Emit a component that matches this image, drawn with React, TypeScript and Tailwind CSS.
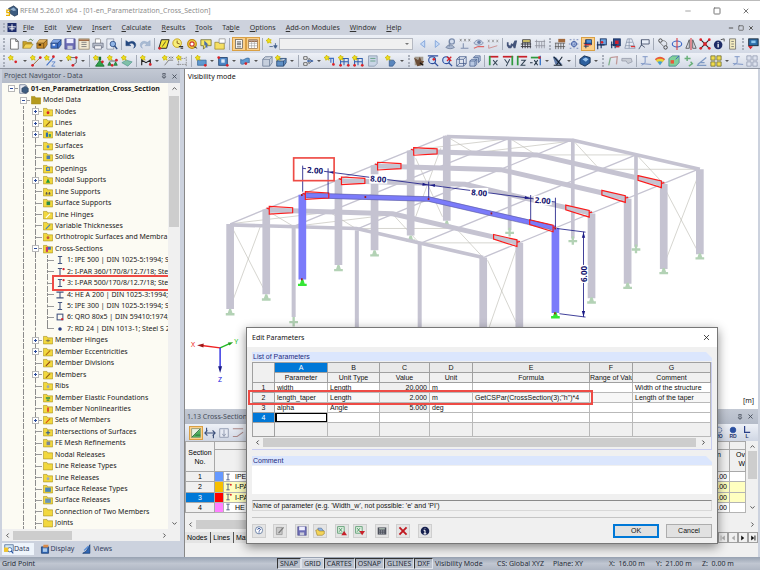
import type { ReactNode } from 'react';
import { X, Minus, Square, ChevronUp, ChevronDown, ChevronLeft, ChevronRight, Pin } from 'lucide-react';

/* ---------- icons, all drawn on a 14 x 14 grid ---------- */

const spark = <path d="M3 0l1 2 2 0-1 2 1 2-2-1-2 1 0-2-2-1 2-1z" fill="#f2e21c" stroke="#c9b500" strokeWidth=".9" />;
const red = (x: number, y: number) => <circle cx={x} cy={y} r="1.6" fill="#d8232a" />;

const glyphs: Record<string, ReactNode> = {
  newFile: <path d="M3 1h6l3 3v9H3zM9 1v3h3" fill="#fff" stroke="#555" strokeWidth=".9" />,
  open: (
    <>
      <path d="M1 12V4h4l1 1h5v3" fill="#c9a227" stroke="#7a6210" strokeWidth=".6" />
      <path d="M1 12l3-5h9l-3 5z" fill="#f3d45a" stroke="#8a6d10" strokeWidth=".6" />
      <path d="M8 3c1-2 3-2 4 0l1-1" fill="none" stroke="#3b6a3b" />
    </>
  ),
  boxBrown: (
    <>
      <path d="M1 6l3-4h9v6l-3 4H1z" fill="#c98d2e" stroke="#5a3c0c" strokeWidth=".7" />
      <path d="M4 2h9l-4 4H1z" fill="#e2b25c" />
      <path d="M1 6h8l4-4M9 6v6" fill="none" stroke="#5a3c0c" strokeWidth=".8" />
      <rect x="3" y="7" width="3" height="2" fill="#33230a" />
    </>
  ),
  boxBlue: (
    <>
      <path d="M1 6l3-4h9v6l-3 4H1z" fill="#3f70c8" stroke="#17305f" strokeWidth=".7" />
      <path d="M4 2h9l-4 4H1z" fill="#7fa4e4" />
      <path d="M1 6h8l4-4M9 6v6" fill="none" stroke="#17305f" strokeWidth=".8" />
      <rect x="3" y="7" width="3" height="2" fill="#dfe8fa" />
    </>
  ),
  save: (
    <>
      <path d="M1 1h12v12H1z" fill="#6c6cb4" stroke="#3d3d7d" strokeWidth=".7" />
      <rect x="3" y="1" width="8" height="5" fill="#eef" />
      <rect x="4" y="9" width="6" height="4" fill="#c9cbd8" />
    </>
  ),
  report: (
    <>
      <rect x="1" y="1" width="12" height="12" fill="#f2ead4" stroke="#8a7a5a" strokeWidth=".8" />
      <path d="M1 2.500h12" stroke="#8b4a22" strokeWidth="1.5" />
      <path d="M4 5h6M4 7.500h6M4 10h6" stroke="#777" />
    </>
  ),
  print: (
    <>
      <path d="M4 6V1h5l1 1v4" fill="#fff" stroke="#666" strokeWidth=".7" />
      <path d="M1 6h12v5H1z" fill="#b9bfcc" stroke="#555c70" strokeWidth=".7" />
      <path d="M3 9h8v4H3z" fill="#f4f4f8" stroke="#555c70" strokeWidth=".7" />
    </>
  ),
  preview: (
    <>
      <path d="M1 1h8v12H1z" fill="#e9edf5" stroke="#70778a" strokeWidth=".7" />
      <circle cx="8" cy="7" r="3.200" fill="#8fb4e6" stroke="#2f4f86" />
      <path d="M10 9l3 4" stroke="#2f4f86" strokeWidth="1.700" />
    </>
  ),
  undo: <path d="M1 3v6h6L5 7c3-2 6 0 6 3l-1 2c5-3 2-9-3-8L4 5z" fill="#24487f" stroke="#24487f" strokeWidth=".5" />,
  redo: <path d="M13 3v6H7l2-2C6 5 3 7 3 10l1 2C-1 9 2 3 7 4l3 1z" fill="#a9bbd3" stroke="#8ea4c2" strokeWidth=".5" />,
  parallelogram: (
    <>
      <path d="M4 2h9l-3 10H1z" fill="#f4e53a" stroke="#222" strokeWidth="1.100" />
      <path d="M5 10l4-6" stroke="#222" strokeWidth=".8" />
      {red(2, 12)}
    </>
  ),
  tag: (
    <>
      <circle cx="6" cy="6" r="5" fill="#f7ee7a" stroke="#c09a10" />
      <path d="M6 3v3l3 1" fill="none" stroke="#7a4b10" />
      <path d="M8 10h5M10 12h3" stroke="#333" strokeWidth="1.300" />
    </>
  ),
  gear: (
    <>
      <circle cx="7" cy="7" r="5" fill="#f7e24a" stroke="#c08a10" strokeWidth="1.500" />
      <circle cx="7" cy="7" r="2.500" fill="#fff" stroke="#c33" strokeWidth="1.300" />
      <path d="M9 10l4 2" stroke="#333" />
    </>
  ),
  pick: (
    <>
      <path d="M1 2h12v7H8l-4 4V9H1z" fill="#f6e664" stroke="#5c5c20" strokeWidth=".8" />
      <path d="M5 3l5 5-2 0 1 3-2 0-1-3-1 1z" fill="#4b6ea8" />
    </>
  ),
  folderNew: (
    <>
      <path d="M1 5h4l1 1h6v7H1z" fill="#f5df62" stroke="#8a7512" strokeWidth=".7" />
      <path d="M6 1h7v5H6z" fill="#fff" stroke="#777" strokeWidth=".7" />
    </>
  ),
  panel: (
    <>
      <rect x="2" y="1" width="10" height="12" fill="#fff" stroke="#444" strokeWidth=".9" />
      <path d="M4 4h6M4 6h6M4 8h6M4 11h6" stroke="#555" strokeWidth="1.200" />
    </>
  ),
  table: (
    <>
      <rect x="1" y="1" width="12" height="12" fill="#fff" stroke="#7a5a3a" strokeWidth=".8" />
      <path d="M1 3h12" stroke="#8a5a3a" strokeWidth="2" />
      <path d="M5 3v10M9 3v10M1 6h12M1 9.500h12" stroke="#999" strokeWidth=".8" />
    </>
  ),
  sparkDown: (
    <>
      {spark}
      <path d="M4 10h4M11 6v5M9 9l2 3 2-3z" stroke="#44618e" fill="#44618e" />
    </>
  ),
  prev: <path d="M9 3v8L4 7z" fill="#c5d9f5" stroke="#7fa3da" />,
  next: <path d="M5 3v8l5-4z" fill="#c5d9f5" stroke="#7fa3da" />,
  eyeP: (
    <>
      <circle cx="8" cy="4" r="3" fill="#d3dcec" stroke="#7d8eae" strokeWidth="1.400" />
      <path d="M5 3v7M1 11c3-4 7-4 10 0-3 2-7 2-10 0z" fill="#a8b6cf" stroke="#73839f" />
    </>
  ),
  xxxDown: (
    <>
      <path d="M1 1l2 3M3 1L1 4M6 1l2 3M8 1L6 4M11 1l2 3M13 1l-2 3" stroke="#777" strokeWidth=".8" />
      <path d="M5 6v6M2 12h9" stroke="#7f8fae" strokeWidth="1.200" />
    </>
  ),
  eyeRed: (
    <>
      <path d="M1 6c3-5 8-5 11 0-3 3-8 3-11 0z" fill="#cdd6e6" stroke="#7f8fae" />
      <circle cx="7" cy="5" r="2" fill="#6a7ea8" />
      <path d="M1 12l5-2h7" stroke="#d66" fill="none" strokeWidth="1.300" />
    </>
  ),
  xxxRed: (
    <>
      <path d="M1 2l2 3M3 2L1 5M6 2l2 3M8 2L6 5M11 2l2 3M13 2l-2 3" stroke="#888" strokeWidth=".8" />
      <path d="M2 8v4M2 12l10-3" stroke="#c88" fill="none" />
    </>
  ),
  wrench: <path d="M1 5v4l2 3h3l2-3 1 3h2l2-9h-3L8 7 6 6 5 9 3 8V5z" fill="#44547a" />,
  railDark: (
    <>
      <path d="M3 2h9v3H3z" fill="#e8d86a" stroke="#3c3c44" />
      <path d="M1 7h12M1 10h12M3 5v7M6 5v7M9 5v7M12 5v7" stroke="#3c3c44" strokeWidth="1.100" fill="none" />
    </>
  ),
  railLight: <path d="M1 4h12M1 9h12M3 2v10M6 4v8M9 4v8M12 2v10" stroke="#8c8f99" strokeWidth=".9" fill="none" />,
  comb: (
    <>
      <path d="M2 6v7M5 6v7M8 6v7M11 6v7M1 6h12M1 10h12" stroke="#555" strokeWidth=".9" />
      <path d="M5 1h8v4H5z" fill="#a1683b" />
    </>
  ),
  gridBlue: (
    <>
      <circle cx="7" cy="7" r="3" fill="#b9ccec" stroke="#33519a" />
      <path d="M7 1v12M1 7h12M2 2h2M10 2h2M2 12h2M10 12h2" stroke="#4a62a2" strokeWidth=".8" strokeDasharray="2 1" />
    </>
  ),
  cubeA: (
    <>
      <rect x="4" y="1" width="8" height="7" fill="#4c8fd8" stroke="#15305f" />
      <path d="M1 6h11M1 10h7M4 1v12" stroke="#15305f" strokeWidth="1.300" />
      <path d="M2 8h9" stroke="#d8232a" strokeWidth="1.500" />
    </>
  ),
  cubeB: (
    <>
      <rect x="5" y="1" width="7" height="7" fill="#6aa4e2" stroke="#15305f" />
      <path d="M2 4v9M1 8h9M6 8v4" stroke="#15305f" strokeWidth="1.300" />
      {red(7, 5)}
    </>
  ),
  cubeC: (
    <>
      <rect x="4" y="1" width="8" height="8" fill="#2a4a8a" stroke="#15305f" />
      <rect x="6" y="3" width="4" height="4" fill="#d3202c" />
      <path d="M1 8h7M2 4v8M6 9v3" stroke="#15305f" strokeWidth="1.300" />
      <path d="M7 10h4" stroke="#d3202c" strokeWidth="2" />
    </>
  ),
  mesh: (
    <>
      <path d="M4 1h5l4 11H1zM3 5h7M2 9h10M6 1v11" fill="#e7ecf5" stroke="#7b88a1" strokeWidth=".8" />
      <path d="M8 10h5" stroke="#d33" strokeWidth="1.500" />
    </>
  ),
  flagBox: (
    <>
      <path d="M4 2h9v5H4z" fill="#e8eef8" stroke="#44506a" />
      <path d="M4 2v7M1 13l3-5 4 3" fill="none" stroke="#44506a" />
    </>
  ),
  chain: (
    <>
      <circle cx="4" cy="3" r="2" fill="none" stroke="#333" />
      <circle cx="10" cy="11" r="2" fill="none" stroke="#333" />
      <path d="M6 3c5 0 6 3 5 6M3 5l5 5" stroke="#555" fill="none" strokeWidth=".8" />
    </>
  ),
  rotate: (
    <>
      <ellipse cx="7" cy="7" rx="5.500" ry="3.500" fill="none" stroke="#3c66c4" strokeWidth="1.300" />
      <path d="M7 0v14" stroke="#d8343a" strokeWidth="1.200" />
    </>
  ),
  mirror: (
    <>
      <path d="M5 2v10H1zM9 2v10h4z" fill="none" stroke="#444" strokeWidth=".9" />
      <path d="M7 0v14" stroke="#d8343a" strokeWidth="1.200" />
    </>
  ),
  cross: (
    <>
      <path d="M2 2l10 10M12 2L2 12" stroke="#222" strokeWidth="1.300" />
      {red(2, 2)}
      {red(12, 2)}
      {red(2, 12)}
      {red(12, 12)}
      <rect x="5" y="5" width="4" height="4" fill="#d8232a" />
    </>
  ),
  info: (
    <>
      <circle cx="6" cy="8" r="5" fill="#1e2c66" />
      <path d="M6 7v4M6 5v1" stroke="#fff" strokeWidth="1.500" />
      <path d="M9 2l4-1v3" stroke="#444" fill="none" />
    </>
  ),
  clip: <path d="M3 1h7v12H3zM5 4h3M5 7h3M5 10h3" fill="#f4ecc0" stroke="#666" strokeWidth=".9" />,
  monitor: (
    <>
      <rect x="2" y="1" width="11" height="8" fill="#2d6da8" stroke="#123" />
      <path d="M5 3h5v3H5z" fill="#8fc8ef" />
      <path d="M1 9l3 4 3-3z" fill="#d8232a" />
    </>
  ),
  node: (
    <>
      {spark}
      {red(9, 8)}
    </>
  ),
  line: (
    <>
      {spark}
      <path d="M3 12L12 3" stroke="#8f5f20" strokeWidth="1" />
      {red(3, 12)}
      {red(12, 3)}
    </>
  ),
  member: (
    <>
      {spark}
      <path d="M3 12l8-9" stroke="#3f6fc4" strokeWidth="1.200" />
      <path d="M9 8h4L9 13h4" stroke="#3f6fc4" fill="none" strokeWidth=".8" />
      {red(11, 2)}
    </>
  ),
  poly: (
    <>
      <path d="M3 7V3h9v6l-4 3" fill="none" stroke="#555" />
      {spark}
      {red(12, 3)}
      {red(8, 12)}
    </>
  ),
  support: (
    <>
      <path d="M8 6l5 7H3z" fill="#2fa24a" stroke="#176c2b" />
      <path d="M8 2v4" stroke="#176c2b" strokeWidth="3" />
      {spark}
      {red(11, 8)}
    </>
  ),
  supports: (
    <>
      {spark}
      <path d="M3 8l2 4H1zM10 8l2 4H8z" fill="#2fa24a" stroke="#176c2b" strokeWidth=".8" />
      <path d="M3 7h8" stroke="#555" />
      {red(11, 6)}
      {red(6, 12)}
    </>
  ),
  surfSupport: (
    <>
      <path d="M1 9l5-3 7 2-5 5z" fill="#7fc0a8" stroke="#4a8f8a" strokeWidth=".7" />
      {spark}
    </>
  ),
  dimA: (
    <>
      {spark}
      <path d="M2 12V5M12 12V5M2 6l5 3 5-3" stroke="#222" fill="none" strokeWidth="1.300" />
      {red(12, 11)}
    </>
  ),
  dimB: (
    <>
      {spark}
      <path d="M3 12l5-6h5M8 2l2 2M10 2L8 4M11 2l2 2M13 2l-2 2" stroke="#555" fill="none" strokeWidth=".8" />
    </>
  ),
  dimC: (
    <>
      {spark}
      <path d="M3 4v9M12 2v11M1 11h12M6 4h6" stroke="#777" strokeWidth=".8" strokeDasharray="2 1" />
    </>
  ),
  surface: (
    <>
      <path d="M3 6h10v6H3z" fill="#5f9ad0" stroke="#305f92" strokeWidth=".8" />
      {spark}
      {red(12, 12)}
    </>
  ),
  opening: (
    <>
      <rect x="2" y="3" width="10" height="9" fill="#4d86c6" stroke="#22446f" />
      <rect x="5" y="5" width="4" height="4" fill="#dce8f7" />
      {red(2, 3)}
      {red(12, 12)}
    </>
  ),
  shell: (
    <>
      <path d="M2 5c3 3 6-3 10-1v5c-4-2-7 4-10 1z" fill="#5f9ad0" stroke="#305f92" strokeWidth=".8" />
      {red(8, 10)}
    </>
  ),
  solid: <path d="M2 5l3-3h8v7l-3 4H2zM2 5h8l3-3M10 5v8" fill="#c6cfdd" stroke="#6b7a94" strokeWidth=".9" />,
  solidNew: (
    <>
      <path d="M2 7l3-3h8v5l-3 4H2zM2 7h8l3-3M10 7v6" fill="#5f8fc4" stroke="#27456f" strokeWidth=".9" />
      {spark}
    </>
  ),
  release: (
    <>
      <path d="M2 2h4v3H2zM2 9h4v3H2zM8 4v6l4-3z" fill="#fff" stroke="#444" strokeWidth=".9" />
      <path d="M6 7h7" stroke="#2f5faf" strokeWidth="1.500" />
    </>
  ),
  ecc: (
    <>
      <path d="M5 4h6v6M8 4v5" stroke="#3f6fc4" fill="none" strokeWidth="1.300" />
      {spark}
      {red(11, 11)}
    </>
  ),
  hall: (
    <>
      <path d="M3 12V4h9v8M3 8h9M7 4v8" stroke="#2f5faf" fill="none" strokeWidth="1.200" />
      {spark}
      {red(3, 12)}
      {red(12, 12)}
    </>
  ),
  page: (
    <>
      <path d="M3 1h10v9l-3 3H3z" fill="#c9d5e6" stroke="#7b8ba4" strokeWidth=".8" />
      <path d="M5 4h6M5 7h6" stroke="#5b9a7c" />
    </>
  ),
  hand: (
    <>
      <path d="M5 6h5l2 3-3 4H5z" fill="#5a86bd" stroke="#2e5285" strokeWidth=".8" />
      {spark}
    </>
  ),
  grab: (
    <>
      <path d="M2 2h10v10H2z" fill="#a49c90" />
      <path d="M1 3l5 3 2-4 2 5 3 0-3 5-5 1z" fill="#6a4c36" />
      <path d="M8 9l4 3" stroke="#111" strokeWidth="1.300" />
    </>
  ),
  zoomIn: (
    <>
      <circle cx="6" cy="6" r="4" fill="#cfe0f8" stroke="#2f4f9e" strokeWidth="1.300" />
      <path d="M9 9l4 4M1 1h12" stroke="#2f4f9e" strokeWidth="1.500" />
      {red(8, 5)}
    </>
  ),
  zoomX: (
    <>
      <circle cx="6" cy="6" r="4" fill="#cfe0f8" stroke="#2f4f9e" strokeWidth="1.300" />
      <path d="M9 9l4 4" stroke="#2f4f9e" strokeWidth="1.500" />
      <path d="M7 2l5 5M12 2L7 7" stroke="#d8232a" strokeWidth="1.500" />
    </>
  ),
  wire: <path d="M2 5l3-3h8v8l-3 3H2zM2 5h8l3-3M10 5v8M5 2v8h8M5 10l-3 3" fill="#e9eff9" stroke="#3f5686" strokeWidth=".9" />,
  cubes: <path d="M5 3l2-2h6v6l-2 2M1 7h6v6H1zM1 7l2-2h6v6l-2 2M7 7l2-2M5 3h6v6" fill="#b8c8e2" stroke="#4d6490" strokeWidth=".9" />,
  axX: (
    <>
      <path d="M2 2h10" stroke="#c8202a" strokeWidth="2" />
      <path d="M2 1v11" stroke="#2f9a3f" strokeWidth="2" />
      <path d="M6 6l5 6M11 6l-5 6" stroke="#345" strokeWidth="1.200" />
    </>
  ),
  axY: (
    <>
      <path d="M1 2h12" stroke="#c8202a" strokeWidth="2" />
      <path d="M12 1v11" stroke="#2f9a3f" strokeWidth="2" />
      <path d="M3 5l3 4M9 5l-4 8" stroke="#345" strokeWidth="1.200" />
    </>
  ),
  axZ: (
    <>
      <path d="M2 2h11" stroke="#c8202a" strokeWidth="2" />
      <path d="M2 1v11" stroke="#2f9a3f" strokeWidth="2" />
      <path d="M6 6h5L6 12h5" stroke="#345" fill="none" strokeWidth="1.200" />
    </>
  ),
  axMX: (
    <>
      <path d="M1 3h10" stroke="#2f9a3f" strokeWidth="2" />
      <path d="M12 1v11" stroke="#2f6fc4" strokeWidth="1.500" />
      <path d="M0 9h3M5 6l4 6M9 6l-4 6" stroke="#234" strokeWidth="1.200" />
      {red(11, 3)}
    </>
  ),
  plane: (
    <>
      <path d="M1 2l4 1 7 8H4z" fill="#5f7aa8" />
      <path d="M2 2l9 10M5 12l7-10M2 12h10" stroke="#15202f" strokeWidth="1.200" />
    </>
  ),
  diamond: (
    <>
      <path d="M1 5l5-4 7 2v6l-6 4-6-3z" fill="#2c5f9e" stroke="#122c50" />
      <path d="M4 5l4-2 3 2-3 3z" fill="#9cc6ee" />
    </>
  ),
  frame: (
    <>
      <path d="M2 12l2-9" stroke="#7fb08a" strokeWidth="1.500" />
      <path d="M4 3l8-1-1 9" stroke="#c09a9a" fill="none" strokeWidth="1.500" />
    </>
  ),
  beam: <path d="M1 4h11l1 4-5 2-2-3H1z" fill="#c8ccd4" stroke="#8c93a2" strokeWidth=".8" />,
  resultAx: <path d="M3 2h6M6 2v7M1 10l12 1M6 9l-4 3" stroke="#7a93c4" fill="none" strokeWidth="1.100" />,
  rainbow: (
    <>
      <path d="M1 5c3-4 9-4 12 0l-6 6z" fill="#e85a3a" />
      <path d="M2 6c3-2 7-2 10 0l-5 5z" fill="#e8d83a" />
      <path d="M4 8c2-1 4-1 6 0l-3 4z" fill="#3f9fd8" />
    </>
  ),
  cubeRes: (
    <>
      <path d="M1 4l4-3h8v8l-4 4H1z" fill="#7fd09a" stroke="#3a7a8f" strokeWidth=".8" />
      <rect x="3" y="6" width="4" height="4" fill="#e85a3a" />
      <path d="M9 5l4-4" stroke="#3a5ac4" />
    </>
  ),
  plus: <path d="M6 1v6M3 4h7M10 8l2 2-4 3" stroke="#69b07a" fill="none" strokeWidth="1.700" />,
  slope: <path d="M1 12h11M2 11L12 3M5 9h5" stroke="#7f9ac4" fill="none" strokeWidth="1.400" />,
  quads: <path d="M1 1h5v5H1zM8 1h5v5H8zM1 8h5v5H1zM8 8h5v5H8z" fill="#f0dc4a" stroke="#5b5b2a" strokeWidth=".8" />,
  quadsGrey: <path d="M1 1h5v5H1zM8 1h5v5H8zM1 8h5v5H1zM8 8h5v5H8z" fill="#dde2ee" stroke="#8791a8" strokeWidth=".8" />,
  tableGreen: (
    <>
      <rect x="1" y="1" width="12" height="12" fill="#e9f0e4" stroke="#7a8a6a" />
      <path d="M1 13L13 2v11z" fill="#4fae5f" />
      <path d="M1 13L13 1M6 10h7" stroke="#2a6a38" strokeWidth="1.200" />
    </>
  ),
  hArrows: <path d="M1 7h12M4 4L1 7l3 3M10 4l3 3-3 3M3 1v4M11 9v4" stroke="#3b4f7a" fill="none" strokeWidth="1.300" />,
  sort: <path d="M2 2h10v10H2zM7 3v7M5 8l2 3 2-3" stroke="#8b95ab" fill="#e6eaf3" />,
  filter: <path d="M1 2h12M1 11h5l7-5" stroke="#a88" fill="none" strokeWidth="1.200" />,
  help: (
    <>
      <circle cx="7" cy="6" r="5" fill="#fff" stroke="#44618e" />
      <path d="M5 5c0-2 4-2 4 0 0 1-2 1-2 3M7 9v1" stroke="#1f3f8f" fill="none" strokeWidth="1.300" />
    </>
  ),
  edit: (
    <>
      <path d="M2 2h8v10H2z" fill="#c9c9c9" stroke="#8f8f8f" />
      <path d="M5 10l7-8" stroke="#777" strokeWidth="1.700" />
    </>
  ),
  excelUp: (
    <>
      <rect x="1" y="1" width="9" height="9" fill="#dff0e2" stroke="#3d8b57" />
      <path d="M3 3l4 5M7 3L3 8" stroke="#3d8b57" strokeWidth="1.200" />
      <path d="M10 7l4 6H6z" fill="#c8202a" />
    </>
  ),
  excelDown: (
    <>
      <rect x="1" y="1" width="9" height="9" fill="#dff0e2" stroke="#3d8b57" />
      <path d="M3 3l4 5M7 3L3 8" stroke="#3d8b57" strokeWidth="1.200" />
      <path d="M10 13l4-6H6z" fill="#c8202a" />
    </>
  ),
  calc: (
    <>
      <rect x="1" y="2" width="12" height="10" fill="#4b4f5a" />
      <path d="M3 4h8" stroke="#cfe0d0" strokeWidth="1.500" />
      <path d="M3 7h8M3 10h8" stroke="#c8ccd6" strokeWidth="1.200" strokeDasharray="1.500 1" />
    </>
  ),
  remove: <path d="M2 2l10 10M12 2L2 12" stroke="#c01820" strokeWidth="2.600" />,
  infoRound: (
    <>
      <circle cx="7" cy="7" r="6" fill="#16204f" />
      <path d="M7 6v5M5 11h4M5 6h2M7 3v1" stroke="#fff" strokeWidth="1.500" />
    </>
  ),
  folderDlg: (
    <>
      <path d="M4 3h5l3 4-6 2z" fill="#8fb4e6" stroke="#44618e" strokeWidth=".8" />
      <path d="M1 6l3-1 2 2 7 0v4l-3 2H3z" fill="#f3d45a" stroke="#8a6d10" strokeWidth=".7" />
    </>
  ),
  display: (
    <>
      <path d="M2 4h10v9H2z" fill="#2f66b4" stroke="#173a70" />
      <path d="M4 6h6v5H4z" fill="#a9c9ec" />
      <path d="M5 1h7l-1 4H4z" fill="#d98b4a" />
    </>
  ),
  views: (
    <>
      <path d="M11 1v12H1l5-3z" fill="#2f66b4" stroke="#173a70" />
      <path d="M3 9l6-6" stroke="#5b8fd8" strokeWidth="2" />
    </>
  ),
  data: (
    <>
      <path d="M1 1h12v9H1z" fill="#cfe6f5" stroke="#44618e" />
      <circle cx="8" cy="8" r="3" fill="#fff" stroke="#1f4fa0" />
      <path d="M10 10l3 3" stroke="#1f4fa0" strokeWidth="1.500" />
      <path d="M0 5h6v6H0z" fill="#f3c52a" />
    </>
  ),
  rfem: (
    <>
      <path d="M3 4l6-3 5 4v6l-4 2-5-3z" fill="#3d5c80" stroke="#1d2f49" strokeWidth=".7" />
      <path d="M5 5l4-2 3 3-3 1z" fill="#92b0cf" />
      <path d="M5 6H1v3h3v3H0" stroke="#e8b000" strokeWidth="1.500" fill="none" />
    </>
  ),
  docRoot: (
    <>
      <path d="M1 1h8l2 2v10H1z" fill="#e8ecf4" stroke="#5a6a86" />
      <path d="M4 6l5-3 4 3v5l-4 2-5-2z" fill="#3d5c80" stroke="#1d2f49" strokeWidth=".7" />
    </>
  ),
  docMark: (
    <>
      <rect width="14" height="14" fill="#1d2c6b" />
      <path d="M7 2v10M1 6h12M3 9h8" stroke="#fff" strokeWidth="1.500" />
    </>
  ),
};

function Glyph({ name, className = 'size-3' }: { name: string; className?: string }) {
  return (
    <svg viewBox="0 0 14 14" className={`${className} shrink-0`} aria-hidden="true">
      {glyphs[name]}
    </svg>
  );
}

/* ---------- toolbars ---------- */

// "|" separator, "v" drop-down arrow, ":" grip, "*" pressed button
const mainLeft = ': newFile open boxBrown boxBlue save report print preview | undo redo | parallelogram tag gear pick folderNew | *panel *table | sparkDown';
const mainRight = 'prev next eyeP xxxDown eyeRed xxxRed | wrench railDark railLight : comb gridBlue *cubeA cubeB cubeC mesh flagBox | chain rotate mirror cross info clip : monitor';
const editLeft = ': node v line member v poly v | support supports surfSupport | dimA v dimB dimC | surface v opening v shell v solid solidNew v | release v ecc hall hall page';
const editRight = 'hand v : grab zoomIn zoomX wire cubes | axX axY axZ axMX v plane v | diamond v : frame beam | resultAx rainbow cubeRes plus slope quads v resultAx quadsGrey';

function Tools({ spec }: { spec: string }) {
  return (
    <>
      {spec.split(' ').map((t, i) => {
        if (t === '|') return <span key={i} className="mx-0.5 h-3 w-px shrink-0 bg-[#a4abb8]" />;
        if (t === ':') return <span key={i} className="mx-0.5 h-3 w-0.5 shrink-0 border-l-2 border-dotted border-[#a9afbb]" />;
        if (t === 'v')
          return (
            <button key={i} aria-label="More" className="flex w-2 shrink-0 justify-center">
              <span className="border-x-2 border-t-2 border-x-transparent border-t-[#555]" />
            </button>
          );
        const on = t.startsWith('*');
        const name = on ? t.slice(1) : t;
        return (
          <button
            key={i}
            aria-label={name}
            className={`flex h-[14px] w-[14px] shrink-0 items-center justify-center ${
              on ? 'border border-[#d9a045] bg-[#fbd08a]' : ''
            }`}
          >
            <Glyph name={name} className={on ? 'size-2.5' : 'size-3'} />
          </button>
        );
      })}
    </>
  );
}

const menus = ['_File', '_Edit', '_View', '_Insert', '_Calculate', '_Results', '_Tools', 'Ta_ble', '_Options', '_Add-on Modules', '_Window', '_Help'];

function TopBars() {
  return (
    <header className="shrink-0">
      <div className="flex h-[19px] items-center bg-white pl-1.5 text-[#8d8d8d]">
        <Glyph name="rfem" />
        <h1 className="ml-0.5 flex-1 text-[7px]">RFEM 5.26.01 x64 - [01-en_Parametrization_Cross_Section]</h1>
        <div className="flex gap-[21px] pr-2.5 text-[#777]">
          <button aria-label="Minimize"><Minus size={8} strokeWidth={2} /></button>
          <button aria-label="Maximize"><Square size={8} strokeWidth={3} /></button>
          <button aria-label="Close"><X size={8} strokeWidth={3} /></button>
        </div>
      </div>
      <nav className="flex h-[15px] items-center bg-[#cdd2dd] pl-[3px] text-[7px] text-[#333]">
        <span className="mr-0.5 h-[9px] border-l-2 border-dotted border-[#a9afbb]" />
        <Glyph name="docMark" className="h-[9px] w-[10px]" />
        <div className="ml-1.5 flex flex-1 gap-[10px]">
          {menus.map((m) => {
            const i = m.indexOf('_');
            return (
              <button key={m}>
                {m.slice(0, i)}
                <u>{m[i + 1]}</u>
                {m.slice(i + 2)}
              </button>
            );
          })}
        </div>
        <div className="flex gap-1 pr-1.5 text-[#555]">
          <button aria-label="Minimize document"><Minus size={6} strokeWidth={4} /></button>
          <button aria-label="Restore document"><Square size={6} strokeWidth={3} /></button>
          <button aria-label="Close document"><X size={6} strokeWidth={4} /></button>
        </div>
      </nav>
      <div className="flex h-[18px] items-center overflow-hidden bg-linear-to-b from-[#eef1f7] to-[#d3d9e5] pl-px">
        <Tools spec={mainLeft} />
        <div className="relative flex min-w-0 flex-1">
          <select aria-label="Load case" className="h-3 w-full appearance-none border border-[#b5b9c2] bg-[#f0f0f0] text-[7px]">
            <option></option>
          </select>
          <span className="pointer-events-none absolute top-[5px] right-1 border-x-2 border-t-2 border-x-transparent border-t-[#777]" />
        </div>
        <div className="ml-[3px] flex items-center">
          <Tools spec={mainRight} />
        </div>
      </div>
      <div className="flex h-4 items-center justify-between overflow-hidden border-b border-[#8d939f] bg-linear-to-b from-[#eef1f7] to-[#d3d9e5] px-px">
        <div className="flex items-center"><Tools spec={editLeft} /></div>
        <div className="flex items-center"><Tools spec={editRight} /></div>
      </div>
    </header>
  );
}

/* ---------- project navigator ---------- */

type Row = { depth: number; text: string; exp?: '+' | '-'; mark?: ReactNode; last?: boolean };

const dot = (c: string) => <circle cx="7" cy="8" r="2" fill={c} />;
const slash = (c: string) => <path d="M4 11l6-6" stroke={c} strokeWidth="1.500" />;
const block = (c: string) => <rect x="5" y="5" width="5" height="5" fill={c} />;
const secI = <path d="M4 2h6M4 12h6M7 2v10" stroke="#44557f" strokeWidth="1.500" />;
const secIPar = (
  <>
    {secI}
    {red(12, 3)}
  </>
);

const rows: Row[] = [
  { depth: 0, text: '01-en_Parametrization_Cross_Section', exp: '-' },
  { depth: 1, text: 'Model Data', exp: '-' },
  { depth: 2, text: 'Nodes', exp: '+', mark: dot('#d8232a') },
  { depth: 2, text: 'Lines', exp: '+', mark: slash('#8a5a10') },
  { depth: 2, text: 'Materials', exp: '+', mark: <><rect x="4" y="5" width="3" height="6" fill="#2a6ab0" /><rect x="8" y="7" width="3" height="4" fill="#3a9a5a" /></> },
  { depth: 2, text: 'Surfaces', mark: dot('#4a8ac8') },
  { depth: 2, text: 'Solids', mark: block('#4a7ab0') },
  { depth: 2, text: 'Openings', mark: <rect x="5" y="5" width="4" height="4" fill="none" stroke="#4a7ab0" strokeWidth="1.500" /> },
  { depth: 2, text: 'Nodal Supports', exp: '+', mark: <path d="M7 5l3 6H4z" fill="#1f9a3a" /> },
  { depth: 2, text: 'Line Supports', mark: <path d="M4 10l1-3 1 3zM8 10l1-3 1 3z" fill="#555" stroke="#555" /> },
  { depth: 2, text: 'Surface Supports', mark: block('#2a8a4a') },
  { depth: 2, text: 'Line Hinges', mark: slash('#fff') },
  { depth: 2, text: 'Variable Thicknesses', mark: slash('#3a7ac0') },
  { depth: 2, text: 'Orthotropic Surfaces and Membra', mark: dot('#c05a3a') },
  { depth: 2, text: 'Cross-Sections', exp: '-', mark: <><rect x="4" y="4" width="3" height="7" fill="#c83a6a" /><rect x="7" y="4" width="4" height="4" fill="#3a6ac0" /></> },
  { depth: 3, text: '1: IPE 500 | DIN 1025-5:1994; Steel S 235', mark: secI },
  { depth: 3, text: '2: I-PAR 360/170/8/12.7/18; Steel S 235', mark: secIPar },
  { depth: 3, text: '3: I-PAR 500/170/8/12.7/18; Steel S 235', mark: secIPar },
  { depth: 3, text: '4: HE A 200 | DIN 1025-3:1994; Steel S 235', mark: <path d="M2 3h10M2 11h10M7 3v8" stroke="#44557f" strokeWidth="1.500" /> },
  { depth: 3, text: '5: IPE 300 | DIN 1025-5:1994; Steel S 235', mark: secI },
  { depth: 3, text: '6: QRO 80x5 | DIN 59410:1974; Steel S 235', mark: <><rect x="3" y="3" width="8" height="8" fill="none" stroke="#44557f" strokeWidth="1.500" />{red(10, 10)}</> },
  { depth: 3, text: '7: RD 24 | DIN 1013-1; Steel S 235', mark: <circle cx="7" cy="7" r="2.500" fill="#2a3f86" />, last: true },
  { depth: 2, text: 'Member Hinges', exp: '+', mark: <path d="M4 8h6M7 6v4" stroke="#555" /> },
  { depth: 2, text: 'Member Eccentricities', exp: '+', mark: slash('#b06a10') },
  { depth: 2, text: 'Member Divisions', mark: slash('#8a3a10') },
  { depth: 2, text: 'Members', exp: '+', mark: slash('#8a5a10') },
  { depth: 2, text: 'Ribs', mark: dot('#9aa8b8') },
  { depth: 2, text: 'Member Elastic Foundations', mark: <path d="M4 7h6M5 10h4" stroke="#2a8a4a" strokeWidth="2" /> },
  { depth: 2, text: 'Member Nonlinearities', mark: <path d="M7 5v6" stroke="#d8232a" strokeWidth="2" /> },
  { depth: 2, text: 'Sets of Members', exp: '+', mark: slash('#d84a10') },
  { depth: 2, text: 'Intersections of Surfaces', mark: <path d="M4 8h6M7 5v6" stroke="#2a5a9a" strokeWidth="1.500" /> },
  { depth: 2, text: 'FE Mesh Refinements', mark: block('#7a8698') },
  { depth: 2, text: 'Nodal Releases' },
  { depth: 2, text: 'Line Release Types' },
  { depth: 2, text: 'Line Releases', mark: dot('#9aa8c8') },
  { depth: 2, text: 'Surface Release Types', mark: <rect x="3" y="5" width="8" height="6" fill="#4a86b8" /> },
  { depth: 2, text: 'Surface Releases', mark: <rect x="3" y="5" width="8" height="6" fill="#6a96b8" /> },
  { depth: 2, text: 'Connection of Two Members' },
  { depth: 2, text: 'Joints' },
];

function TreeIcon({ row }: { row: Row }) {
  if (row.depth === 0) return <Glyph name="docRoot" className="mx-px h-[10px] w-[10px]" />;
  return (
    <svg viewBox="0 0 14 14" className="mx-px h-[10px] w-[10px] shrink-0" aria-hidden="true">
      {row.depth < 3 && <path d="M0.500 12.500V2h5l1 2h7v8.500z" fill={row.depth === 1 ? '#b59a1c' : '#f2d83e'} stroke="#a08a1c" strokeWidth=".8" />}
      {row.mark}
    </svg>
  );
}

function TreeRow({ row }: { row: Row }) {
  return (
    <li className="relative flex min-h-0 flex-1 items-center pl-1 whitespace-nowrap">
      {Array.from({ length: row.depth }, (_, i) => (
        <span key={i} className={`ml-[5px] w-[7px] shrink-0 self-stretch ${i > 0 ? 'border-l border-dashed border-[#8c8c8c]' : ''}`} />
      ))}
      <span className="relative flex w-3 shrink-0 items-center justify-end self-stretch">
        {row.depth > 1 && (
          <span className={`absolute top-0 left-[5px] border-l border-dashed border-[#8c8c8c] ${row.last ? 'h-1/2' : 'h-full'}`} />
        )}
        <span className="w-[6px] border-t border-dashed border-[#9a9a9a]" />
        {row.exp && (
          <button
            aria-label={row.exp === '+' ? 'Expand' : 'Collapse'}
            className="absolute left-[2px] flex h-[7px] w-[7px] items-center justify-center border border-[#b8b8b8] bg-white"
          >
            <span className="absolute h-px w-[3px] bg-[#2a4a9a]" />
            {row.exp === '+' && <span className="absolute h-[3px] w-px bg-[#2a4a9a]" />}
          </button>
        )}
      </span>
      <TreeIcon row={row} />
      <span className={`ml-px ${row.depth === 0 ? 'font-bold' : ''}`}>{row.text}</span>
      {row.text.startsWith('3:') && <span className="absolute -top-0.5 -right-[5px] -bottom-0.5 left-[50px] z-10 border-2 border-[#ee4b45]" />}
    </li>
  );
}

function Navigator() {
  return (
    <aside className="flex w-[184px] shrink-0 flex-col bg-[#ccd2de] pr-1 pl-0.5 text-[7px] text-[#1a1a1a]">
      <div className="flex h-[14px] shrink-0 items-center bg-linear-to-b from-[#c3c9d4] to-[#b4bbc8] px-0.5 text-[#444b58]">
        <h2 className="flex-1">Project Navigator - Data</h2>
        <Pin size={6} strokeWidth={3} />
        <button aria-label="Close navigator" className="ml-1"><X size={7} strokeWidth={3} /></button>
      </div>
      <div className="flex min-h-0 flex-1 bg-[#fcfbf3]">
        <ul className="relative flex min-w-0 flex-1 flex-col overflow-x-clip [overflow-clip-margin:5px]">
          {rows.map((r) => (
            <TreeRow key={r.text} row={r} />
          ))}
        </ul>
        <div className="z-[1] flex w-3 flex-col items-center bg-[#f0f0f0] py-0.5 text-[#444]">
          <ChevronUp size={7} strokeWidth={3} />
          <span className="mt-1 h-[131px] w-[10px] bg-[#cdcdcd]" />
          <ChevronDown size={7} strokeWidth={3} className="mt-auto" />
        </div>
      </div>
      <div className="flex h-3 shrink-0 items-center bg-[#f0f0f0] px-0.5 pr-3 text-[#444]">
        <ChevronLeft size={7} strokeWidth={3} />
        <span className="ml-0.5 h-[9px] w-[59px] bg-[#cdcdcd]" />
        <ChevronRight size={7} strokeWidth={3} className="ml-auto" />
      </div>
      <div className="flex h-4 shrink-0 items-center gap-1.5 text-[#33415f]">
        <button className="flex h-3 items-center bg-[#eef4fb] pr-1 pl-0.5"><Glyph name="data" className="size-2.5" />Data</button>
        <button className="flex items-center gap-px"><Glyph name="display" className="size-2.5" />Display</button>
        <button className="flex items-center gap-px pl-0.5"><Glyph name="views" className="size-2.5" />Views</button>
      </div>
    </aside>
  );
}

/* ---------- 3D model ---------- */

// every frame of the hall is shifted by (108, -44) against the one before it
const DX = 108;
const DY = -44;
const grey = '#c5c3d1';
const blue = '#7b7bfa';

function Foot({ x, y, on }: { x: number; y: number; on?: boolean }) {
  return <path d={`M${x - 3} ${y - 4}h6l4 12h6v7h-26v-7h6z`} fill={on ? '#35e635' : '#b3d2b5'} />;
}

function Frame({ n, on }: { n: number; on?: boolean }) {
  const x = 135 + DX * n;
  const y = 467 + DY * n;
  const c = on ? blue : grey;
  const edge = n === 0 || n === 6;
  return (
    <g>
      <path d={`M${x} ${y}v254M${x + 757} ${y + 100}v254`} stroke={c} strokeWidth="23" />
      <path d={`M${x} ${y + 2}L${x + 378} ${y + 13}L${x + 757} ${y + 100}`} fill="none" stroke={c} strokeWidth={edge ? 11 : 15} />
      {on && (
        <path d={`M${x + 12} ${y - 5}L${x + 378} ${y + 6}L${x + 745} ${y + 91}M${x + 12} ${y + 9}L${x + 378} ${y + 20}L${x + 745} ${y + 105}`} fill="none" stroke="#55558a" strokeWidth="1.500" />
      )}
      <Foot x={x} y={y + 258} on={on} />
      <Foot x={x + 757} y={y + 355} on={on} />
      {!edge && (
        <g fill="none" stroke="#fb1a1a" strokeWidth="3.500">
          <path d={`M${x + 9} ${y - 9}l70 4v15l-70 4zM${x + 9} ${y - 1}l-8-3`} />
          <path d={`M${x + 680} ${y + 75}l70 16v20l-70-22z`} />
          <path d={`M${x + 750} ${y + 98}l9-2`} />
        </g>
      )}
    </g>
  );
}

const purlins = 'M135 466L782 203M325 474L971 210M514 482L1162 213M702 525L1349 260M892 567L1538 302';
const roofEnd = 'M135 466L432 431M325 474L243 425M325 474L622 438M514 482L432 431M514 480H811M702 525L622 438M702 523H1000M892 567L811 480';

function Model() {
  return (
    <svg viewBox="0 3 1719 1017" preserveAspectRatio="xMinYMin slice" className="absolute inset-0 h-full w-full" fontFamily="'Noto Sans', sans-serif">
      <g fill="none" stroke="#c2c0b8" strokeWidth="2">
        <path d={roofEnd} />
        <path d={roofEnd} transform="translate(540 -220)" />
        <path d="M145 485L235 660M225 475L145 690M905 575L990 760M990 545L910 775M1440 370L1532 545M1530 335L1440 570M690 270L770 445M765 240L690 445" />
      </g>
      <path d={purlins} fill="none" stroke={grey} strokeWidth="4" />
      <path d="M971 215V485M1160 215V510M1349 262V535" stroke={grey} strokeWidth="11" />
      {[[971, 490], [1160, 515], [1349, 540]].map(([x, y]) => (
        <path key={x} d={`M${x} ${y - 12}v26M${x - 13} ${y + 3}h26`} stroke="#b3d2b5" strokeWidth="7" />
      ))}
      {[6, 5, 4, 3].map((n) => (
        <Frame key={n} n={n} />
      ))}
      <path d="M325 475V745M514 485V1000M702 525V1000" stroke={grey} strokeWidth="12" />
      <path d="M325 745v28M312 760h26" stroke="#b3d2b5" strokeWidth="7" />
      <Frame n={1} />
      <Frame n={0} />
      <Frame n={2} on />
      {[[350, 380], [540, 386], [729, 392], [917, 435], [1108, 480], [350, 632], [1107, 734]].map(([x, y]) => (
        <rect key={x + y} x={x - 3} y={y - 3} width="5" height="6" fill="#a01c1c" />
      ))}

      <g stroke="#1b1b86" strokeWidth="2.500" fill="none">
        <path d="M352 292V370M428 300V375M729 340V388M1034 380V455M1108 388V475" />
        <path d="M352 300L430 311L730 350L1034 390L1108 401" />
        <path d="M1112 480L1198 491M1120 735L1198 745M1192 490V745" />
      </g>
      <path d="M430 311l16-3-1 9zM728 350l-17-7-1 9zM732 350l16-3-1 9zM1034 390l-17-7-1 9zM1192 491l-5 17h10zM1192 744l-5-17h10z" fill="#1b1b86" />
      <g fill="#fff">
        <rect x="362" y="292" width="54" height="28" />
        <rect x="551" y="318" width="54" height="28" />
        <rect x="853" y="359" width="54" height="28" />
        <rect x="1043" y="382" width="54" height="28" />
        <rect x="1179" y="589" width="27" height="54" />
      </g>
      <g fill="#12126e" fontSize="24" fontWeight="700" textAnchor="middle" fontFamily="'Open Sans', sans-serif">
        <text x="389" y="315" transform="rotate(5 389 306)">2.00</text>
        <text x="578" y="341" transform="rotate(5 578 332)">8.00</text>
        <text x="880" y="382" transform="rotate(5 880 373)">8.00</text>
        <text x="1070" y="405" transform="rotate(5 1070 396)">2.00</text>
        <text x="1192" y="625" transform="rotate(-90 1192 616)">6.00</text>
      </g>
      <rect x="325" y="269" width="121" height="68" fill="none" stroke="#ee4b45" strokeWidth="5" />

      <g fill="none" strokeWidth="4">
        <path d="M105 837L50 830" stroke="#f02020" />
        <path d="M105 837L135 824" stroke="#22b822" />
        <path d="M105 837V898" stroke="#2020e0" />
      </g>
      <path d="M36 829l20-5-1 12z" fill="#a01818" />
      <path d="M144 820l-16 1 5 9z" fill="#1fa01f" />
      <path d="M105 912l-6-20h12z" fill="#1b1b86" />
      <g fontSize="21" textAnchor="middle">
        <text x="24" y="835" fill="#f02020">X</text>
        <text x="153" y="826" fill="#22c822">Y</text>
        <text x="105" y="939" fill="#2020e0">Z</text>
      </g>
      <text x="8" y="33" fontSize="21" fill="#111">Visibility mode</text>
      <text x="1669" y="1001" fontSize="21" fill="#111">[m]</text>
    </svg>
  );
}

/* ---------- cross-section table ---------- */

const sections = [
  { no: 1, color: 'bg-[#6699ff]', name: 'IPE 500', value: '0.00' },
  { no: 2, color: 'bg-[#f7bf00]', name: 'I-PAR 360', value: '0.00', par: true },
  { no: 3, color: 'bg-[#ff0000]', name: 'I-PAR 500', value: '0.00', par: true },
  { no: 4, color: 'bg-[#ff80ff]', name: 'HE A 200', value: '0.00' },
];

const pagers = ['First table', 'Previous table', 'Next table', 'Last table'];

function SectionTable() {
  return (
    <section className="flex h-[148px] shrink-0 flex-col bg-[#f0f0f0] text-[7px]">
      <div className="flex h-[15px] items-center bg-linear-to-b from-[#c3c9d4] to-[#b4bbc8] pr-1 pl-0.5 text-[#444b58]">
        <h2 className="flex-1">1.13 Cross-Sections</h2>
        <Pin size={6} strokeWidth={3} />
        <button aria-label="Close table" className="ml-1"><X size={7} strokeWidth={3} /></button>
      </div>
      <div className="flex h-[17px] items-center bg-linear-to-b from-[#eef1f7] to-[#cfd6e3] pl-1">
        <Tools spec="*tableGreen hArrows sort filter" />
        <div className="ml-auto flex gap-1 pr-1.5 text-center font-[Liberation_Sans] text-[5px] leading-[5px] font-bold text-[#26356b]">
          {['RO', 'RD', 'L'].map((t) => (
            <button key={t} className="flex w-[10px] flex-col items-center">
              <svg viewBox="0 0 10 10" className="size-2">
                {t === 'L' ? (
                  <path d="M2 0v8h7" fill="none" stroke="#2a3f86" strokeWidth="1.500" />
                ) : (
                  <circle cx="5" cy="5" r="3.500" fill={t === 'RD' ? '#2a4fa0' : 'none'} stroke="#2a4fa0" strokeDasharray={t === 'RO' ? '2 1' : undefined} />
                )}
              </svg>
              {t}
            </button>
          ))}
        </div>
      </div>
      <div className="flex h-[72px] font-[Liberation_Sans]">
        <table className="w-full flex-1 table-fixed border-collapse leading-[9px] [&_td]:border [&_td]:border-[#b4b4b4] [&_th]:border [&_th]:border-[#a8a8a8] [&_th]:font-normal">
          <colgroup>
            <col className="w-[29px]" />
            <col className="w-[9px]" />
            <col />
            <col className="w-[36px]" />
            <col className="w-[16px]" />
          </colgroup>
          <thead>
            <tr className="h-2">
              <th rowSpan={2} className="p-0">Section<br />No.</th>
              <th colSpan={2} className="p-0"></th>
              <th className="p-0"></th>
              <th className="p-0"></th>
            </tr>
            <tr className="h-[22px]">
              <th colSpan={2} className="p-0">Cross-Section</th>
              <th className="p-0 pr-2 text-right align-top">Rotation</th>
              <th className="overflow-hidden p-0 text-right align-top">Ov<br />W</th>
            </tr>
          </thead>
          <tbody>
            {sections.map((s) => (
              <tr key={s.no} className={`h-[10px] ${s.par ? 'bg-[#ffffc0]' : 'bg-white'}`}>
                <th scope="row" className={`p-0 ${s.no === 3 ? 'bg-[#0078d7] text-white' : 'bg-[#f0f0f0]'}`}>{s.no}</th>
                <td className={`p-0 ${s.color}`}></td>
                <td className="p-0">
                  <span className="flex items-center gap-[3px] whitespace-nowrap">
                    <svg viewBox="0 0 14 14" className="size-2">{s.par ? secIPar : secI}</svg>
                    {s.name}
                  </span>
                </td>
                <td className="p-0 pr-0.5 text-right">{s.value}</td>
                <td className="p-0"></td>
              </tr>
            ))}
          </tbody>
        </table>
        <div className="flex w-[12px] flex-col items-center bg-[#f0f0f0] py-0.5 text-[#444]">
          <ChevronUp size={7} strokeWidth={3} />
          <span className="mt-px h-7 w-[9px] bg-[#cdcdcd]" />
          <ChevronDown size={7} strokeWidth={3} className="mt-auto" />
        </div>
      </div>
      <div className="mt-1.5 flex h-[11px] items-center px-0.5 text-[#444]">
        <ChevronLeft size={7} strokeWidth={3} />
        <span className="ml-0.5 h-[9px] w-2/3 bg-[#cdcdcd]" />
        <ChevronRight size={7} strokeWidth={3} className="ml-auto" />
      </div>
      <div className="mt-0.5 flex h-[11px] items-center bg-[#e4e4e4] font-[Liberation_Sans]">
        {['Nodes', 'Lines', 'Materials', 'Surfaces'].map((t) => (
          <button key={t} className="h-full border-r border-[#555] px-0.5 pr-[3px]">{t}</button>
        ))}
        <div className="ml-auto flex h-full">
          {pagers.map((t, i) => (
            <button key={t} aria-label={t} className="flex w-[10px] items-center justify-center border border-[#a0a0a0] bg-[#f0f0f0]">
              <svg viewBox="0 0 10 10" className="size-1.5" fill={i < 2 ? '#aaa' : '#111'}>
                <path d={i < 2 ? 'M8 1v8L3 5z' : 'M2 1v8l5-4z'} />
                {i === 0 && <path d="M1 1h1.500v8H1z" />}
                {i === 3 && <path d="M7.500 1H9v8H7.500z" />}
              </svg>
            </button>
          ))}
        </div>
      </div>
    </section>
  );
}

/* ---------- edit parameters dialog ---------- */

const columns = [
  ['A', 'Parameter'],
  ['B', 'Unit Type'],
  ['C', 'Value'],
  ['D', 'Unit'],
  ['E', 'Formula'],
  ['F', 'Range of Valu'],
  ['G', 'Comment'],
];

const params = [
  ['width', 'Length', '20.000', 'm', '', '', 'Width of the structure'],
  ['length_taper', 'Length', '2.000', 'm', 'GetCSPar(CrossSection(3);"h")*4', '', 'Length of the taper'],
  ['alpha', 'Angle', '5.000', 'deg', '', '', ''],
];

const dialogTools = ['help', 'edit', 'save', 'folderDlg', 'excelUp', 'excelDown', 'calc', 'remove', 'infoRound'];
const toolGaps = ['', 'ml-[7px]', 'ml-2', 'ml-1', 'ml-2', 'ml-1', 'ml-2', 'ml-[7px]', 'ml-2'];

const groupBar = 'h-[9px] bg-[#dbe6fd] pl-px leading-[9px] text-[#1b2a80] [clip-path:polygon(0_0,calc(100%-6px)_0,100%_6px,100%_100%,0_100%)]';

function EditParameters() {
  return (
    <div
      role="dialog"
      aria-label="Edit Parameters"
      className="absolute top-[258px] right-[40px] left-[61px] z-20 flex flex-col border border-[#777] bg-[#f0f0f0] font-[Liberation_Sans] text-[7px] text-[#111] shadow-[0_3px_10px_rgba(0,0,0,0.45)]"
    >
      <div className="flex h-[19px] items-center bg-white pr-1.5 pl-[5px] font-[Noto_Sans]">
        <h2 className="flex-1">Edit Parameters</h2>
        <button aria-label="Close dialog"><X size={9} strokeWidth={2} /></button>
      </div>
      <div className="flex flex-col px-[5px] pt-[5px] pb-[5px]">
        <h3 className={groupBar}>List of Parameters</h3>
        <div className="relative mt-px border-r border-b border-[#c9cdf0] pb-0.5">
          <table className="w-full table-fixed border-collapse leading-[9px] [&_td]:overflow-hidden [&_td]:border [&_td]:border-[#b9b9b9] [&_td]:p-0 [&_td]:px-0.5 [&_td]:whitespace-nowrap [&_th]:overflow-hidden [&_th]:border [&_th]:border-[#a0a0a0] [&_th]:p-0 [&_th]:font-normal [&_th]:whitespace-nowrap">
            <colgroup>
              <col className="w-[22px]" />
              <col className="w-[53px]" />
              <col className="w-[52px]" />
              <col className="w-[50px]" />
              <col className="w-[43px]" />
              <col className="w-[117px]" />
              <col className="w-[43px]" />
              <col />
            </colgroup>
            <thead>
              <tr className="h-[9px]">
                <th rowSpan={2}></th>
                {columns.map(([letter]) => (
                  <th key={letter} className={letter === 'A' ? 'bg-[#0078d7] text-white' : 'bg-[#e9e9e9]'}>{letter}</th>
                ))}
              </tr>
              <tr className="h-[10px]">
                {columns.map(([letter, label]) => (
                  <th key={letter}>{label}</th>
                ))}
              </tr>
            </thead>
            <tbody>
              {params.map((p, i) => (
                <tr key={p[0]} className={`h-[10px] ${i === 1 ? 'bg-[#f7f7f7]' : 'bg-white'}`}>
                  <th scope="row" className="bg-[#f0f0f0]">{i + 1}</th>
                  {p.map((cell, j) => (
                    <td key={j} className={j === 2 ? 'bg-[#f0f0f0] text-right' : ''}>{cell}</td>
                  ))}
                </tr>
              ))}
              <tr className="h-[10px] bg-white">
                <th scope="row" className="bg-[#0078d7] text-white">4</th>
                <td className="!p-0">
                  <input aria-label="Parameter name" className="block h-[9px] w-full border border-l-2 border-black bg-white px-0.5 outline-none" />
                </td>
                {columns.slice(1).map(([l]) => <td key={l}></td>)}
              </tr>
              <tr className="h-[14px]">
                <th></th>
                {columns.map(([l]) => <td key={l}></td>)}
              </tr>
            </tbody>
          </table>
          <div className="absolute top-[28px] right-[118px] -left-1 h-[15px] border-2 border-[#ee4b45]" />
          <div className="flex h-[10px] items-center px-0.5 text-[#333]">
            <ChevronLeft size={7} strokeWidth={3} />
            <span className="mx-0.5 h-[9px] flex-1 bg-[#cdcdcd]" />
            <ChevronRight size={7} strokeWidth={3} className="mx-0.5" />
          </div>
        </div>
        <label htmlFor="comment" className={`mt-1.5 ${groupBar}`}>Comment</label>
        <textarea id="comment" className="mt-px block h-7 resize-none bg-white p-0.5 outline-none" />
        <p className="mt-1.5 h-[11px] border border-[#d8d8d8] border-t-[#8a8a8a] leading-[9px]">Name of parameter (e.g. 'Width_w', not possible: 'e' and 'PI')</p>
        <hr className="mt-1.5 border-[#c4c4c4]" />
        <div className="mt-1.5 flex h-[14px]">
          {dialogTools.map((t, i) => (
            <button key={t} aria-label={t} className={`flex w-[14px] items-center justify-center border border-[#cfcfcf] bg-[#e4e4e4] ${toolGaps[i]}`}>
              <Glyph name={t} className="size-2.5" />
            </button>
          ))}
          <button className="ml-auto w-[46px] border-2 border-[#0078d7] bg-[#e1e1e1]">OK</button>
          <button className="ml-[7px] w-[46px] border border-[#adadad] bg-[#e1e1e1]">Cancel</button>
        </div>
      </div>
    </div>
  );
}

/* ---------- status bar ---------- */

const snaps = [
  ['SNAP', false],
  ['GRID', true],
  ['CARTES', false],
  ['OSNAP', false],
  ['GLINES', false],
  ['DXF', false],
] as const;

function StatusBar() {
  return (
    <footer className="flex h-[13px] shrink-0 items-center bg-linear-to-b from-[#98a2b2] via-[#c0c6d1] to-[#b0b7c4] pl-0.5 text-[7px] whitespace-nowrap text-[#262c38]">
      <span className="w-[275px]">Grid Point</span>
      <div className="flex">
        {snaps.map(([s, on]) => (
          <button key={s} className={`h-[11px] border px-0.5 leading-[9px] ${on ? 'border-[#dfe3ea] bg-[#c6ccd6]' : 'border-t-[#333] border-r-[#dfe3ea] border-b-[#dfe3ea] border-l-[#333]'}`}>{s}</button>
        ))}
      </div>
      <span className="ml-0.5 flex-1">Visibility Mode</span>
      <span className="w-[56px]">CS: Global XYZ</span>
      <span className="w-[56px]">Plane: XY</span>
      <span className="w-[47px]">X:&nbsp; 16.00 m</span>
      <span className="w-[46px]">Y:&nbsp; 21.00 m</span>
      <span className="w-[58px]">Z:&nbsp; 0.00 m</span>
    </footer>
  );
}

export default function App() {
  return (
    <div className="flex h-screen flex-col overflow-hidden border-t border-[#bbb] bg-[#ccd2de] font-[Noto_Sans,sans-serif] leading-[10px]">
      <TopBars />
      <main className="flex min-h-0 flex-1">
        <Navigator />
        <div className="relative mr-0.5 flex min-w-0 flex-1 flex-col border-l border-[#888]">
          <div className="relative min-h-0 flex-1 bg-white">
            <Model />
          </div>
          <SectionTable />
          <EditParameters />
        </div>
      </main>
      <StatusBar />
    </div>
  );
}
